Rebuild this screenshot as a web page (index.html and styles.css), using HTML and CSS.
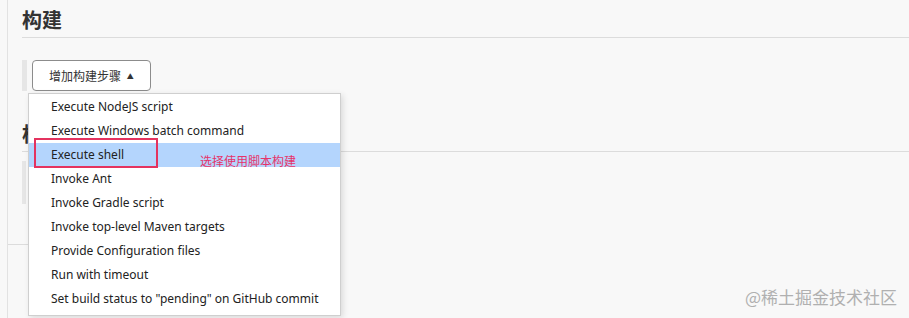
FILE: index.html
```html
<!DOCTYPE html>
<html lang="zh-CN">
<head>
    <meta charset="UTF-8">
    <meta name="viewport" content="width=device-width, initial-scale=1.0">
    <title>构建</title>
    <link rel="stylesheet" href="styles.css">
</head>
<body>
    <div class="frame">
        <h2 class="section-title">构建</h2>

        <div class="step-block">
            <button class="add-step">增加构建步骤 <span class="caret">&#9650;</span></button>
        </div>

        <h2 class="section-title second">构建后操作</h2>
        <div class="step-block short"></div>

        <div class="frame-foot"></div>
    </div>

    <!-- Dropdown opened from the button -->
    <ul class="menu">
        <li>Execute NodeJS script</li>
        <li>Execute Windows batch command</li>
        <li class="active">Execute shell</li>
        <li>Invoke Ant</li>
        <li>Invoke Gradle script</li>
        <li>Invoke top-level Maven targets</li>
        <li>Provide Configuration files</li>
        <li>Run with timeout</li>
        <li>Set build status to "pending" on GitHub commit</li>
    </ul>

    <div class="mark-box"></div>
    <div class="note">选择使用脚本构建</div>

    <div class="watermark">@稀土掘金技术社区</div>
</body>
</html>
```

FILE: styles.css
```css
body {
    margin: 0;
    background: #f8f8f8;
    font-family: 'Noto Sans', 'Noto Sans CJK SC', sans-serif;
    color: #333;
    height: 318px;
    overflow: hidden;
    position: relative;
}
.frame {
    margin-left: 7px;
    border-left: 1px solid #e2e2e2;
    padding-left: 14px;
    height: 318px;
    box-sizing: border-box;
}
.section-title {
    margin: 0;
    padding: 8px 0 3px;
    line-height: 26px;
    font-size: 20px;
    font-weight: bold;
    color: #333;
    border-bottom: 1px solid #dcdcdc;
}
.section-title.second {
    margin-top: 23px;
}
.step-block {
    margin-top: 22px;
    border-left: 5px solid #e6e6e6;
    padding-left: 5px;
    display: flex;
}
.step-block.short {
    margin-top: 9px;
    height: 43px;
    border-left-width: 4px;
}
.add-step {
    width: 119px;
    height: 31px;
    background: #fff;
    border: 1px solid #8c8c8c;
    border-radius: 4px;
    font-family: 'Noto Sans CJK SC', sans-serif;
    font-size: 12px;
    color: #333;
    text-align: left;
    padding: 0 0 0 16px;
}
.caret {
    font-size: 7px;
    margin-left: 3px;
    vertical-align: 2px;
}
.frame-foot {
    margin-left: -14px;
    margin-top: 40px;
    width: 22px;
    border-top: 1px solid #dcdcdc;
}
.menu {
    position: absolute;
    left: 28px;
    top: 93px;
    width: 313px;
    height: 223px;
    box-sizing: border-box;
    margin: 0;
    padding: 1px 0 0;
    list-style: none;
    background: #fff;
    border: 1px solid #cfcfcf;
    box-shadow: 2px 2px 6px rgba(0, 0, 0, 0.12);
}
.menu li {
    height: 24px;
    line-height: 24px;
    padding-left: 22px;
    font-size: 12px;
    color: #222;
    white-space: nowrap;
}
.menu li.active {
    background: #b4d5fd;
}
.mark-box {
    position: absolute;
    left: 34px;
    top: 138px;
    width: 120px;
    height: 26px;
    border: 2px solid #e4335f;
}
.note {
    position: absolute;
    left: 200px;
    top: 153px;
    font-family: 'Noto Sans CJK SC', sans-serif;
    font-size: 12px;
    line-height: 16px;
    color: #e6336a;
}
.watermark {
    position: absolute;
    right: 12px;
    top: 285px;
    font-family: 'Noto Sans CJK SC', sans-serif;
    font-size: 17px;
    line-height: 24px;
    color: #b0b0b0;
    letter-spacing: 0;
}
```
